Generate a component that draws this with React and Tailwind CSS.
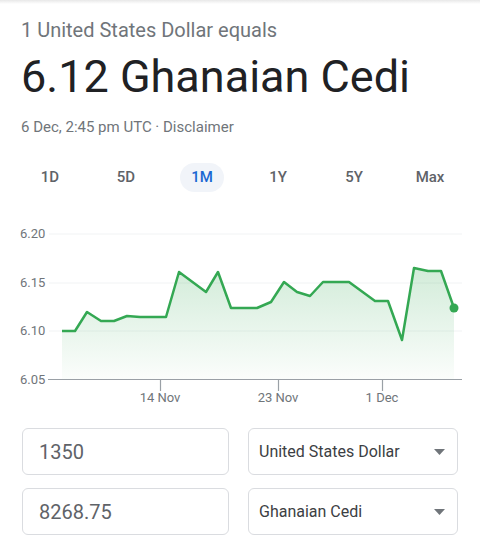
import React from 'react';

const ranges = ['1D', '5D', '1M', '1Y', '5Y', 'Max'];

const points = [
    [62, 332], [75, 332], [87, 313], [101, 322], [114, 322], [127, 317], [140, 318],
    [166, 318], [179, 273], [206, 293], [218, 273], [231, 309], [257, 309], [271, 303],
    [284, 283], [297, 293], [310, 297], [323, 283], [349, 283], [375, 302], [388, 302],
    [402, 341], [414, 269], [428, 272], [441, 272], [454, 309],
];

const CHART_TOP = 220;

const PriceChart = () => {
    const pts = points.map(([x, y]) => [x, y - CHART_TOP]);
    const line = pts.map(([x, y], i) => `${i ? 'L' : 'M'}${x} ${y}`).join(' ');
    const area = `${line} L454 160 L62 160 Z`;
    const last = pts[pts.length - 1];

    return (
        <svg width="480" height="190" viewBox="0 0 480 190" className="block">
            <defs>
                <linearGradient id="fill" x1="0" y1="0" x2="0" y2="1">
                    <stop offset="0%" stopColor="#34a853" stopOpacity="0.22" />
                    <stop offset="100%" stopColor="#34a853" stopOpacity="0.02" />
                </linearGradient>
            </defs>

            {/* grid */}
            {[15, 64, 112].map((y) => (
                <line key={y} x1="49" x2="462" y1={y} y2={y} stroke="#f1f3f4" strokeWidth="1" />
            ))}

            <path d={area} fill="url(#fill)" />
            <path d={line} fill="none" stroke="#34a853" strokeWidth="2.5" strokeLinejoin="round" />
            <circle cx={last[0]} cy={last[1]} r="4.5" fill="#34a853" />

            {/* axis */}
            <line x1="48" x2="462" y1="160.5" y2="160.5" stroke="#9aa0a6" strokeWidth="1.2" />
            {[160, 278, 382].map((x) => (
                <line key={x} x1={x + 0.5} x2={x + 0.5} y1="160" y2="172" stroke="#9aa0a6" strokeWidth="1.2" />
            ))}

            <g fill="#70757a" fontFamily="Roboto, sans-serif" fontSize="13">
                {[['6.20', 19], ['6.15', 68], ['6.10', 116], ['6.05', 165]].map(([t, y]) => (
                    <text key={t} x="20" y={y}>{t}</text>
                ))}
                <text x="160" y="183" textAnchor="middle">14 Nov</text>
                <text x="278" y="183" textAnchor="middle">23 Nov</text>
                <text x="382" y="183" textAnchor="middle">1 Dec</text>
            </g>
        </svg>
    );
};

const ConverterRow = ({ amount, currency }) => (
    <div className="flex gap-[19px]">
        <div className="w-[207px] h-[47px] border border-[#dadce0] rounded-md flex items-center pl-4 text-[20px] text-[#5f6368]">
            {amount}
        </div>
        <div className="w-[210px] h-[47px] border border-[#dadce0] rounded-md flex items-center justify-between pl-[10px] pr-3 text-[16px] text-[#3c4043]">
            <span>{currency}</span>
            <svg width="11" height="6" viewBox="0 0 11 6">
                <path d="M0 0 L11 0 L5.5 6 Z" fill="#70757a" />
            </svg>
        </div>
    </div>
);

const App = () => {
    return (
        <div className="w-[480px] h-[554px] bg-white overflow-hidden relative font-['Roboto',sans-serif]">
            <div className="h-[4px] bg-gradient-to-b from-[#e8e8e8] to-white" />

            <div className="pl-[21px]">
                <div className="mt-[13px] text-[20px] leading-[26px] text-[#70757a]">
                    1 United States Dollar equals
                </div>
                <div className="mt-[9px] text-[45px] leading-[50px] text-[#202124]">
                    6.12 Ghanaian Cedi
                </div>
                <div className="mt-[15px] text-[15px] leading-[20px] text-[#70757a]">
                    6 Dec, 2:45 pm UTC · Disclaimer
                </div>
            </div>

            {/* time ranges */}
            <div className="mt-[26px] mx-[12px] grid grid-cols-6">
                {ranges.map((r) => (
                    <div key={r} className="flex justify-center">
                        <span
                            className={`h-[29px] px-[11px] rounded-full flex items-center text-[15px] font-medium ${r === '1M' ? 'bg-[#f1f4f9] text-[#1a67d2]' : 'text-[#5f6368]'}`}
                        >
                            {r}
                        </span>
                    </div>
                ))}
            </div>

            <div className="mt-[27px]">
                <PriceChart />
            </div>

            <div className="pl-[22px] mt-[19px] flex flex-col gap-[13px]">
                <ConverterRow amount="1350" currency="United States Dollar" />
                <ConverterRow amount="8268.75" currency="Ghanaian Cedi" />
            </div>
        </div>
    );
};

export default App;
